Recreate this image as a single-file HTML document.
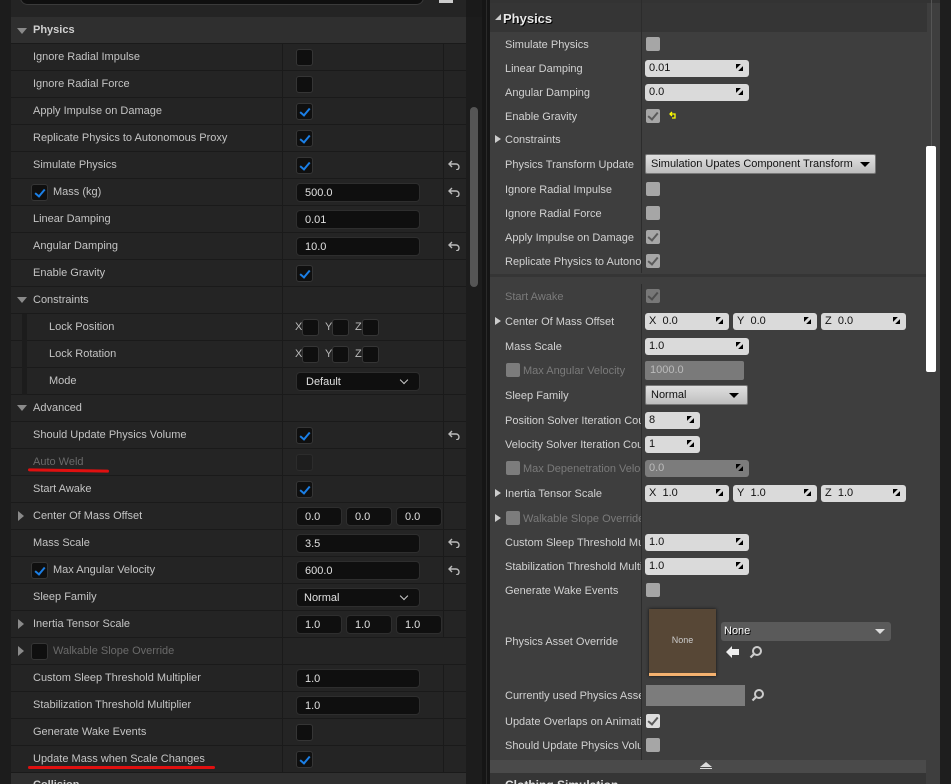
<!DOCTYPE html>
<html><head><meta charset="utf-8"><style>
*{box-sizing:border-box;margin:0;padding:0}
body{width:951px;height:784px;overflow:hidden;background:#151515;font-family:"Liberation Sans",sans-serif;position:relative}
.a{position:absolute}
#L{position:absolute;left:0;top:0;width:482px;height:784px;background:#1a1a1a;overflow:hidden}
.r{position:absolute;left:11px;width:455px;height:27px;background:#242424;border-bottom:1px solid #1a1a1a}
.r .l{position:absolute;left:22px;top:7px;font-size:11px;color:#c4c4c4;white-space:nowrap}
.r .d1{position:absolute;left:271px;top:0;width:1px;height:27px;background:#1a1a1a}
.r .d2{position:absolute;left:432px;top:0;width:1px;height:27px;background:#1a1a1a}
.cb{position:absolute;width:17px;height:17px;background:#0f0f0f;border:1px solid #353535;border-radius:3px}
.cb.k::after{content:"";position:absolute;left:5px;top:2px;width:4px;height:8px;border:solid #1b7fe6;border-width:0 2px 2px 0;transform:rotate(40deg)}
.in{position:absolute;height:19px;background:#0f0f0f;border:1px solid #2e2e2e;border-radius:4px;font-size:11px;color:#e0e0e0;padding:3px 0 0 8px}
.rs{position:absolute;left:437px;top:8px;width:12px;height:10px}
.tri{position:absolute;left:6px;top:10px;width:0;height:0;border-left:5px solid transparent;border-right:5px solid transparent;border-top:6px solid #8a8a8a}
.trr{position:absolute;left:7px;top:8px;width:0;height:0;border-top:5px solid transparent;border-bottom:5px solid transparent;border-left:6px solid #8a8a8a}
.dd::after{content:"";position:absolute;right:12px;top:4px;width:5px;height:5px;border:solid #ccc;border-width:0 1.5px 1.5px 0;transform:rotate(45deg)}
#R{position:absolute;left:490px;top:0;width:450px;height:784px;background:#3e3e3e;overflow:hidden}
.rl{position:absolute;left:15px;font-size:11px;color:#d2d2d2;white-space:nowrap;width:136px;overflow:hidden;margin-top:1px}
.rl.g{color:#7a7a7a}
.rc{position:absolute;width:14px;height:14px;background:#a6a6a6;border-radius:2px}
.rc.k::after{content:"";position:absolute;left:4px;top:1px;width:4px;height:8px;border:solid #5a5a5a;border-width:0 2px 2px 0;transform:rotate(40deg)}
.ri{position:absolute;height:17px;background:#dadada;border-radius:3px;font-size:11px;color:#111;padding:2px 0 0 4px}
.ri::after{content:"";position:absolute;right:6px;top:4px;width:7px;height:7px;background:linear-gradient(135deg,#000 35%,transparent 36%,transparent 64%,#000 65%)}
.rt{position:absolute;left:5px;width:0;height:0;border-top:4px solid transparent;border-bottom:4px solid transparent;border-left:6px solid #ccc}
.mg{position:absolute;width:14px;height:14px}
</style></head><body>
<svg width="0" height="0" style="position:absolute"><defs>
<symbol id="rst" viewBox="0 0 12 10"><path d="M4 1 L1 4 L4 7 M1 4 H8 A3 3 0 0 1 8 10" fill="none" stroke="#bbb" stroke-width="1.4"/></symbol>
<symbol id="mgl" viewBox="0 0 14 14"><circle cx="8" cy="6" r="4" fill="none" stroke="#ccc" stroke-width="2"/><path d="M5 9 L1.5 12.5" stroke="#ccc" stroke-width="2.2"/></symbol>
</defs></svg>
<div id="L">
<div class="a" style="left:0;top:0;width:11px;height:784px;background:#1c1c1c"></div>
<div class="a" style="left:11px;top:0;width:455px;height:17px;background:#242424"></div>
<div class="a" style="left:20px;top:-10px;width:404px;height:15px;background:#0f0f0f;border:1px solid #3a3a3a;border-radius:8px"></div>
<div class="a" style="left:439px;top:0;width:14px;height:3px;background:#ccc"></div>
<div class="a" style="left:11px;top:17px;width:455px;height:27px;background:#2f2f2f;border-bottom:1px solid #1a1a1a"><div class="tri" style="left:6px;top:11px"></div><div class="a" style="left:22px;top:7px;font-size:11px;font-weight:bold;color:#d0d0d0">Physics</div></div>
<div class="a" style="left:466px;top:17px;width:16px;height:767px;background:#1c1c1c"></div>
<div class="a" style="left:470px;top:107px;width:8px;height:180px;background:#555;border-radius:4px"></div>

<div class="r" style="top:44px"><div class="l">Ignore Radial Impulse</div><div class="d1"></div><div class="d2"></div><div class="cb" style="left:285px;top:5px"></div></div>
<div class="r" style="top:71px"><div class="l">Ignore Radial Force</div><div class="d1"></div><div class="d2"></div><div class="cb" style="left:285px;top:5px"></div></div>
<div class="r" style="top:98px"><div class="l">Apply Impulse on Damage</div><div class="d1"></div><div class="d2"></div><div class="cb k" style="left:285px;top:5px"></div></div>
<div class="r" style="top:125px"><div class="l">Replicate Physics to Autonomous Proxy</div><div class="d1"></div><div class="d2"></div><div class="cb k" style="left:285px;top:5px"></div></div>
<div class="r" style="top:152px"><div class="l">Simulate Physics</div><div class="d1"></div><div class="d2"></div><div class="cb k" style="left:285px;top:5px"></div><svg class="rs"><use href="#rst"/></svg></div>
<div class="r" style="top:179px"><div class="cb k" style="left:20px;top:5px"></div><div class="l" style="left:42px">Mass (kg)</div><div class="d1"></div><div class="d2"></div><div class="in" style="left:285px;top:4px;width:124px">500.0</div><svg class="rs"><use href="#rst"/></svg></div>
<div class="r" style="top:206px"><div class="l">Linear Damping</div><div class="d1"></div><div class="d2"></div><div class="in" style="left:285px;top:4px;width:124px">0.01</div></div>
<div class="r" style="top:233px"><div class="l">Angular Damping</div><div class="d1"></div><div class="d2"></div><div class="in" style="left:285px;top:4px;width:124px">10.0</div><svg class="rs"><use href="#rst"/></svg></div>
<div class="r" style="top:260px"><div class="l">Enable Gravity</div><div class="d1"></div><div class="d2"></div><div class="cb k" style="left:285px;top:5px"></div></div>
<div class="r" style="top:287px"><div class="tri"></div><div class="l">Constraints</div><div class="d1"></div><div class="d2"></div></div>
<div class="r" style="top:314px"><div class="a" style="left:11px;top:0;width:5px;height:27px;background:#1c1c1c"></div><div class="l" style="left:38px">Lock Position</div><div class="d1"></div><div class="d2"></div><div class="a" style="left:284px;top:7px;font-size:11px;color:#bbb">X</div><div class="cb" style="left:291px;top:5px"></div><div class="a" style="left:314px;top:7px;font-size:11px;color:#bbb">Y</div><div class="cb" style="left:321px;top:5px"></div><div class="a" style="left:344px;top:7px;font-size:11px;color:#bbb">Z</div><div class="cb" style="left:351px;top:5px"></div></div>
<div class="r" style="top:341px"><div class="a" style="left:11px;top:0;width:5px;height:27px;background:#1c1c1c"></div><div class="l" style="left:38px">Lock Rotation</div><div class="d1"></div><div class="d2"></div><div class="a" style="left:284px;top:7px;font-size:11px;color:#bbb">X</div><div class="cb" style="left:291px;top:5px"></div><div class="a" style="left:314px;top:7px;font-size:11px;color:#bbb">Y</div><div class="cb" style="left:321px;top:5px"></div><div class="a" style="left:344px;top:7px;font-size:11px;color:#bbb">Z</div><div class="cb" style="left:351px;top:5px"></div></div>
<div class="r" style="top:368px"><div class="a" style="left:11px;top:0;width:5px;height:27px;background:#1c1c1c"></div><div class="l" style="left:38px">Mode</div><div class="d1"></div><div class="d2"></div><div class="in dd" style="left:285px;top:4px;width:124px;padding-left:9px">Default</div></div>
<div class="r" style="top:395px"><div class="tri"></div><div class="l">Advanced</div><div class="d1"></div><div class="d2"></div></div>
<div class="r" style="top:422px"><div class="l">Should Update Physics Volume</div><div class="d1"></div><div class="d2"></div><div class="cb k" style="left:285px;top:5px"></div><svg class="rs"><use href="#rst"/></svg></div>
<div class="r" style="top:449px"><div class="l" style="color:#6a6a6a">Auto Weld</div><div class="d1"></div><div class="d2"></div><div class="cb" style="left:285px;top:5px;background:#1e1e1e;border-color:#2c2c2c"></div><div class="a" style="left:17px;top:20px;width:81px;height:3px;background:#e01010;border-radius:2px;transform:rotate(1deg)"></div></div>
<div class="r" style="top:476px"><div class="l">Start Awake</div><div class="d1"></div><div class="d2"></div><div class="cb k" style="left:285px;top:5px"></div></div>
<div class="r" style="top:503px"><div class="trr"></div><div class="l">Center Of Mass Offset</div><div class="d1"></div><div class="d2"></div><div class="in" style="left:285px;top:4px;width:46px">0.0</div><div class="in" style="left:335px;top:4px;width:46px">0.0</div><div class="in" style="left:385px;top:4px;width:46px">0.0</div></div>
<div class="r" style="top:530px"><div class="l">Mass Scale</div><div class="d1"></div><div class="d2"></div><div class="in" style="left:285px;top:4px;width:124px">3.5</div><svg class="rs"><use href="#rst"/></svg></div>
<div class="r" style="top:557px"><div class="cb k" style="left:20px;top:5px"></div><div class="l" style="left:42px">Max Angular Velocity</div><div class="d1"></div><div class="d2"></div><div class="in" style="left:285px;top:4px;width:124px">600.0</div><svg class="rs"><use href="#rst"/></svg></div>
<div class="r" style="top:584px"><div class="l">Sleep Family</div><div class="d1"></div><div class="d2"></div><div class="in dd" style="left:285px;top:4px;width:124px;padding-left:7px">Normal</div></div>
<div class="r" style="top:611px"><div class="trr"></div><div class="l">Inertia Tensor Scale</div><div class="d1"></div><div class="d2"></div><div class="in" style="left:285px;top:4px;width:46px">1.0</div><div class="in" style="left:335px;top:4px;width:46px">1.0</div><div class="in" style="left:385px;top:4px;width:46px">1.0</div></div>
<div class="r" style="top:638px"><div class="trr"></div><div class="cb" style="left:20px;top:5px"></div><div class="l" style="left:42px;color:#6a6a6a">Walkable Slope Override</div><div class="d1"></div></div>
<div class="r" style="top:665px"><div class="l">Custom Sleep Threshold Multiplier</div><div class="d1"></div><div class="d2"></div><div class="in" style="left:285px;top:4px;width:124px">1.0</div></div>
<div class="r" style="top:692px"><div class="l">Stabilization Threshold Multiplier</div><div class="d1"></div><div class="d2"></div><div class="in" style="left:285px;top:4px;width:124px">1.0</div></div>
<div class="r" style="top:719px"><div class="l">Generate Wake Events</div><div class="d1"></div><div class="d2"></div><div class="cb" style="left:285px;top:5px"></div></div>
<div class="r" style="top:746px"><div class="l">Update Mass when Scale Changes</div><div class="d1"></div><div class="d2"></div><div class="cb k" style="left:285px;top:5px"></div><div class="a" style="left:17px;top:20px;width:187px;height:3px;background:#e01010;border-radius:2px"></div></div>
<div class="a" style="left:11px;top:773px;width:455px;height:11px;background:#2f2f2f"><div class="a" style="left:22px;top:6px;font-size:11px;color:#ccc;font-weight:bold">Collision</div></div>
</div>
<div class="a" style="left:486px;top:0;width:1px;height:784px;background:#2a2a2a"></div>

<div id="R">
<div class="a" style="left:0;top:0;width:450px;height:3px;background:#333"></div>
<div class="a" style="left:0;top:3px;width:437px;height:29px;background:#353535"></div>
<div class="a" style="left:5px;top:14px;width:0;height:0;border-left:6px solid transparent;border-bottom:6px solid #ccc"></div>
<div class="a" style="left:13px;top:11px;font-size:13px;font-weight:bold;color:#e8e8e8;text-shadow:1px 1px 0 #000">Physics</div>
<div class="a" style="left:151px;top:0;width:1px;height:273px;background:#2c2c2c"></div>
<div class="a" style="left:151px;top:284px;width:1px;height:476px;background:#2c2c2c"></div>
<div class="a" style="left:0;top:274px;width:436px;height:3px;background:#353535"></div>
<div class="a" style="left:436px;top:146px;width:10px;height:226px;background:#fff;border-radius:2px"></div>
<div class="a" style="left:441px;top:0;width:1px;height:146px;background:#555"></div>

<div class="rl" style="top:38px">Simulate Physics</div><div class="rc" style="left:156px;top:37px"></div>
<div class="rl" style="top:62px">Linear Damping</div><div class="ri" style="left:155px;top:60px;width:104px">0.01</div>
<div class="rl" style="top:86px">Angular Damping</div><div class="ri" style="left:155px;top:84px;width:104px">0.0</div>
<div class="rl" style="top:110px">Enable Gravity</div><div class="rc k" style="left:156px;top:109px"></div>
<svg class="a" style="left:179px;top:111px" width="9" height="9" viewBox="0 0 9 9"><path d="M3 1 L1 3 L3 5 M1 3 H6 V7 H3" fill="none" stroke="#ff0" stroke-width="1.3"/></svg>
<div class="rt" style="top:135px"></div><div class="rl" style="top:133px">Constraints</div>
<div class="rl" style="top:158px">Physics Transform Update</div>
<div class="a" style="left:155px;top:154px;width:231px;height:20px;background:linear-gradient(#e0e0e0,#bdbdbd);border:1px solid #777;border-radius:2px;font-size:11px;color:#111;padding:3px 0 0 5px">Simulation Upates Component Transform<span style="position:absolute;right:5px;top:7px;border-left:5px solid transparent;border-right:5px solid transparent;border-top:5px solid #000"></span></div>
<div class="rl" style="top:183px">Ignore Radial Impulse</div><div class="rc" style="left:156px;top:182px"></div>
<div class="rl" style="top:207px">Ignore Radial Force</div><div class="rc" style="left:156px;top:206px"></div>
<div class="rl" style="top:231px">Apply Impulse on Damage</div><div class="rc k" style="left:156px;top:230px"></div>
<div class="rl" style="top:255px">Replicate Physics to Autonomous Proxy</div><div class="rc k" style="left:156px;top:254px"></div>

<div class="rl g" style="top:290px">Start Awake</div><div class="rc k" style="left:156px;top:289px;opacity:.55"></div>
<div class="rt" style="top:317px"></div><div class="rl" style="top:315px">Center Of Mass Offset</div>
<div class="ri" style="left:155px;top:313px;width:84px">X&nbsp;&nbsp;0.0</div><div class="ri" style="left:243px;top:313px;width:84px">Y&nbsp;&nbsp;0.0</div><div class="ri" style="left:331px;top:313px;width:85px">Z&nbsp;&nbsp;0.0</div>
<div class="rl" style="top:340px">Mass Scale</div><div class="ri" style="left:155px;top:338px;width:104px">1.0</div>
<div class="rc" style="left:16px;top:363px;opacity:.6"></div><div class="rl g" style="left:33px;top:364px">Max Angular Velocity</div>
<div class="a" style="left:155px;top:361px;width:99px;height:19px;background:#7a7a7a;border-radius:2px;font-size:11px;color:#bbb;padding:3px 0 0 5px">1000.0</div>
<div class="rl" style="top:389px">Sleep Family</div>
<div class="a" style="left:155px;top:385px;width:103px;height:20px;background:linear-gradient(#e0e0e0,#bdbdbd);border:1px solid #777;border-radius:2px;font-size:11px;color:#111;padding:3px 0 0 5px">Normal<span style="position:absolute;right:8px;top:7px;border-left:5px solid transparent;border-right:5px solid transparent;border-top:5px solid #000"></span></div>
<div class="rl" style="top:414px">Position Solver Iteration Count</div><div class="ri" style="left:155px;top:412px;width:55px">8</div>
<div class="rl" style="top:438px">Velocity Solver Iteration Count</div><div class="ri" style="left:155px;top:436px;width:55px">1</div>
<div class="rc" style="left:16px;top:461px;opacity:.6"></div><div class="rl g" style="left:33px;top:462px;width:118px">Max Depenetration Velocity</div>
<div class="ri" style="left:155px;top:460px;width:104px;background:#7c7c7c;color:#bbb">0.0</div>
<div class="rt" style="top:489px"></div><div class="rl" style="top:487px">Inertia Tensor Scale</div>
<div class="ri" style="left:155px;top:485px;width:84px">X&nbsp;&nbsp;1.0</div><div class="ri" style="left:243px;top:485px;width:84px">Y&nbsp;&nbsp;1.0</div><div class="ri" style="left:331px;top:485px;width:85px">Z&nbsp;&nbsp;1.0</div>
<div class="rt" style="top:514px"></div><div class="rc" style="left:16px;top:511px;opacity:.6"></div><div class="rl g" style="left:33px;top:512px;width:118px">Walkable Slope Override</div>
<div class="rl" style="top:536px">Custom Sleep Threshold Multiplier</div><div class="ri" style="left:155px;top:534px;width:104px">1.0</div>
<div class="rl" style="top:560px">Stabilization Threshold Multiplier</div><div class="ri" style="left:155px;top:558px;width:104px">1.0</div>
<div class="rl" style="top:584px">Generate Wake Events</div><div class="rc" style="left:156px;top:583px"></div>
<div class="rl" style="top:635px">Physics Asset Override</div>
<div class="a" style="left:159px;top:609px;width:67px;height:67px;background:#574736;box-shadow:0 0 3px #111"><div class="a" style="left:0;bottom:0;width:67px;height:3px;background:#f5b26f"></div><div class="a" style="left:0;top:26px;width:67px;text-align:center;font-size:9px;color:#ccc">None</div></div>
<div class="a" style="left:231px;top:622px;width:170px;height:19px;background:#5a5a5a;border-radius:3px;font-size:11px;color:#fff;padding:3px 0 0 3px;text-shadow:1px 1px 0 #000">None<span style="position:absolute;right:6px;top:7px;border-left:5px solid transparent;border-right:5px solid transparent;border-top:5px solid #ddd"></span></div>
<svg class="a" style="left:236px;top:646px" width="13" height="12" viewBox="0 0 13 12"><path d="M0 6 L6 0 V3 H13 V9 H6 V12 Z" fill="#eee"/></svg>
<svg class="mg" style="left:259px;top:645px"><use href="#mgl"/></svg>
<div class="rl" style="top:689px">Currently used Physics Asset</div>
<div class="a" style="left:156px;top:685px;width:99px;height:21px;background:#7c7c7c"></div>
<svg class="mg" style="left:261px;top:688px"><use href="#mgl"/></svg>
<div class="rl" style="top:715px">Update Overlaps on Animation</div><div class="rc k" style="left:156px;top:714px;background:#ddd"></div>
<div class="rl" style="top:739px">Should Update Physics Volume</div><div class="rc" style="left:156px;top:738px"></div>
<div class="a" style="left:0;top:760px;width:436px;height:13px;background:#4a4a4a"><div class="a" style="left:210px;top:2px;border-left:6px solid transparent;border-right:6px solid transparent;border-bottom:5px solid #ddd"></div><div class="a" style="left:210px;top:8px;width:12px;height:1px;background:#ddd"></div></div>
<div class="a" style="left:0;top:773px;width:436px;height:11px;background:#353535"><div class="a" style="left:15px;top:5px;font-size:12px;font-weight:bold;color:#ddd">Clothing Simulation</div></div>
</div>
<div class="a" style="left:940px;top:0;width:11px;height:784px;background:#1e1e1e"></div>
</body></html>
